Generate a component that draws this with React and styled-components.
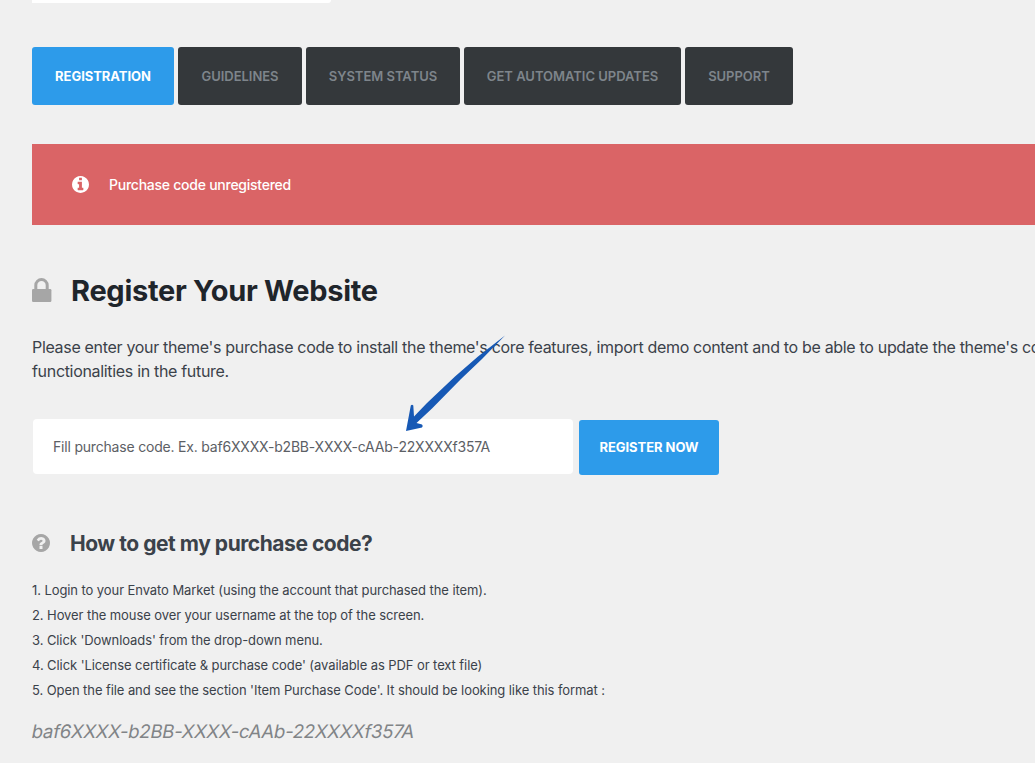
import React from "react";
import styled, { createGlobalStyle } from "styled-components";

const Global = createGlobalStyle`
  * { box-sizing: border-box; }
  html, body { margin: 0; background: #f0f0f0; }
  body { font-family: Inter, "Liberation Sans", sans-serif; color: #3b424a; }
`;

const Page = styled.main`
  position: relative;
  width: 100%;
  height: 763px;
  padding-left: 32px;
  overflow: hidden;
`;

const TopField = styled.div`
  width: 299px;
  height: 3px;
  border-radius: 0 0 3px 0;
  background: #fff;
`;

const Tabs = styled.nav`
  display: flex;
  gap: 4px;
  margin-top: 44px;
`;

const Tab = styled.button`
  width: ${(p) => p.$width}px;
  height: 58px;
  padding: 0;
  border: 0;
  border-radius: 3px;
  background: ${(p) => (p.$active ? "#2d9bea" : "#34383b")};
  color: ${(p) => (p.$active ? "#fff" : "#7e858b")};
  font: ${(p) => (p.$active ? 700 : 600)} 13px Inter, sans-serif;
  letter-spacing: ${(p) => (p.$active ? "-0.05px" : "-0.02px")};
  white-space: nowrap;
`;

const Notice = styled.section`
  display: flex;
  align-items: center;
  gap: 20px;
  height: 81px;
  margin-top: 39px;
  padding-left: 40px;
  background: #da6466;
  color: #fff;
  font-size: 14px;
  font-weight: 500;
  letter-spacing: -0.25px;
  svg { width: 17px; height: 17px; margin-bottom: 1px; }
`;

const Title = styled.h1`
  display: flex;
  align-items: center;
  gap: 19px;
  height: 40px;
  margin: 45px 0 0;
  color: #1f252b;
  font-size: 29px;
  font-weight: 700;
  letter-spacing: -0.3px;
  svg { width: 20px; height: 24px; color: #a6a6a6; }
`;

const Intro = styled.p`
  margin: 25px 0 0;
  font-size: 16px;
  line-height: 24px;
  letter-spacing: -0.32px;
  white-space: nowrap;
`;

const Form = styled.div`
  display: flex;
  align-items: flex-start;
  gap: 6px;
  height: 56px;
  margin-top: 36px;
`;

const CodeInput = styled.input`
  width: 540px;
  height: 55px;
  margin-left: 1px;
  padding: 0 20px;
  border: 0;
  border-radius: 4px;
  font: 400 14px Inter, sans-serif;
  letter-spacing: -0.195px;
  &::placeholder { color: #5c6065; opacity: 1; }
`;

const Register = styled(Tab)`
  height: 55px;
  margin-top: 1px;
  padding-bottom: 2px;
`;

const SubTitle = styled.h2`
  display: flex;
  align-items: center;
  gap: 20px;
  height: 30px;
  margin: 53px 0 0;
  font-size: 21px;
  font-weight: 700;
  letter-spacing: -0.46px;
  svg { width: 18px; height: 18px; color: #a6a6a6; }
`;

const Steps = styled.div`
  margin-top: 20px;
  font-size: 13px;
  line-height: 25px;
  letter-spacing: -0.083px;
`;

const Sample = styled.em`
  display: block;
  width: max-content;
  margin-top: 16px;
  color: #818487;
  font-size: 18.5px;
  font-style: normal;
  line-height: 25px;
  letter-spacing: -0.23px;
  transform: skewX(-11deg);
`;

const Arrow = styled.svg`
  position: absolute;
  left: 400px;
  top: 330px;
`;

const steps = [
  "1. Login to your Envato Market (using the account that purchased the item).",
  "2. Hover the mouse over your username at the top of the screen.",
  "3. Click 'Downloads' from the drop-down menu.",
  "4. Click 'License certificate & purchase code' (available as PDF or text file)",
  "5. Open the file and see the section 'Item Purchase Code'. It should be looking like this format :",
];

const InfoIcon = () => (
  <svg viewBox="0 0 1536 1536" fill="currentColor">
    <path d="M1024 1248v-160q0-14-9-23t-23-9h-96v-512q0-14-9-23t-23-9h-320q-14 0-23 9t-9 23v160q0 14 9 23t23 9h96v320h-96q-14 0-23 9t-9 23v160q0 14 9 23t23 9h448q14 0 23-9t9-23zM896 352v-160q0-14-9-23t-23-9h-192q-14 0-23 9t-9 23v160q0 14 9 23t23 9h192q14 0 23-9t9-23zM1536 768q0 209-103 385.5t-279.5 279.5-385.5 103-385.5-103-279.5-279.5-103-385.5 103-385.5 279.5-279.5 385.5-103 385.5 103 279.5 279.5 103 385.5z" />
  </svg>
);

const LockIcon = () => (
  <svg viewBox="0 0 20 24">
    <path d="M3.8 12V7.3a5.7 5.7 0 0 1 11.4 0V12" fill="none" stroke="currentColor" strokeWidth="3" />
    <rect x="0" y="11" width="19.4" height="13" rx="1.2" fill="currentColor" />
  </svg>
);

const QuestionIcon = () => (
  <svg viewBox="0 0 1536 1536" fill="currentColor">
    <path d="M896 1248v-192q0-14-9-23t-23-9h-192q-14 0-23 9t-9 23v192q0 14 9 23t23 9h192q14 0 23-9t9-23zM1152 576q0-88-55.5-163t-138.5-116-170-41q-243 0-371 213-15 24 8 42l132 100q7 6 19 6 16 0 25-12 53-68 86-92 34-24 86-24 48 0 85.500 26t37.500 59q0 38-20 61t-68 45q-63 28-115.500 86.500t-52.500 125.500v36q0 14 9 23t23 9h192q14 0 23-9t9-23q0-19 21.500-49.500t54.500-49.500q32-18 49-28.500t46-35 44.500-48 28-60.500 12.500-81zM1536 768q0 209-103 385.500t-279.500 279.500-385.500 103-385.500-103-279.500-279.500-103-385.500 103-385.500 279.500-279.500 385.500-103 385.500 103 279.500 279.500 103 385.500z" />
  </svg>
);

export default function App() {
  return (
    <Page>
      <Global />
      <TopField />
      <Tabs>
        <Tab $width={142} $active>REGISTRATION</Tab>
        <Tab $width={124}>GUIDELINES</Tab>
        <Tab $width={154}>SYSTEM STATUS</Tab>
        <Tab $width={217}>GET AUTOMATIC UPDATES</Tab>
        <Tab $width={108}>SUPPORT</Tab>
      </Tabs>
      <Notice><InfoIcon /><span>Purchase code unregistered</span></Notice>
      <Title><LockIcon /><span>Register Your Website</span></Title>
      <Intro>
        Please enter your theme's purchase code to install the theme's core features, import demo content and to be able to update the theme's core<br />
        functionalities in the future.
      </Intro>
      <Form>
        <CodeInput placeholder="Fill purchase code. Ex. baf6XXXX-b2BB-XXXX-cAAb-22XXXXf357A" />
        <Register $width={140} $active>REGISTER NOW</Register>
      </Form>
      <SubTitle><QuestionIcon /><span>How to get my purchase code?</span></SubTitle>
      <Steps>{steps.map((s) => <div key={s}>{s}</div>)}</Steps>
      <Sample>baf6XXXX-b2BB-XXXX-cAAb-22XXXXf357A</Sample>
      <Arrow width="110" height="106" viewBox="0 0 110 106">
        <path d="M105 5.500L78 26.500L55 46.500L27 73L14 86.500L13.300 75.500Q12 74 10.800 75.500L6 101L22 97.500Q23.500 96 22 94.500L16.500 93L32 78.500L61 49L82 29Z" fill="#1759b5" />
      </Arrow>
    </Page>
  );
}
